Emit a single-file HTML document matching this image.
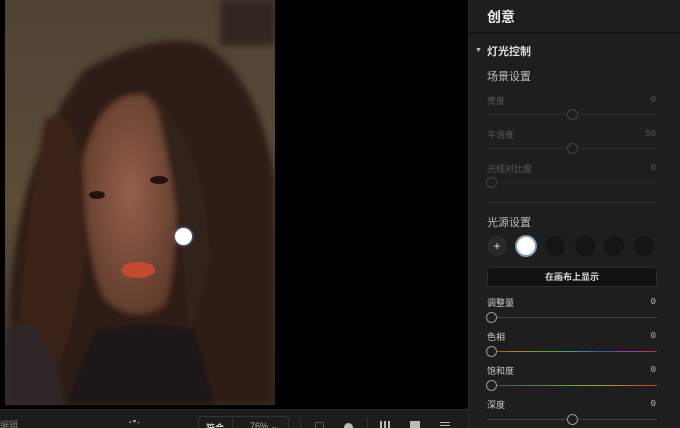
<!DOCTYPE html><html><head><meta charset="utf-8"><style>
*{margin:0;padding:0;box-sizing:border-box}
html,body{width:680px;height:428px;overflow:hidden}
body{background:#000;position:relative;font-family:"Liberation Sans","Noto Sans CJK SC",sans-serif}
.a{position:absolute}
.p{left:468px;top:0;width:212px;height:428px;background:#1e1e1e;border-left:1px solid #2a2a2a}
.t{font-size:10px;color:#d0d0d0;position:absolute}
.dim{color:#5a5a5a}
.v{position:absolute;right:24px;font-size:9px;font-family:"Liberation Mono",monospace}
.tr{position:absolute;left:487px;width:170px;height:1px;background:#3a3a3a}
.k{position:absolute;width:11px;height:11px;border-radius:50%;border:1.5px solid #9a9a9a;background:#1e1e1e}
.c{position:absolute;top:236px;width:20px;height:20px;border-radius:50%;background:#141414}
</style></head><body>
<svg class="a" style="left:5px;top:0" width="270" height="405" viewBox="0 0 270 405">
<defs><linearGradient id="bg" x1="0" y1="0" x2="0" y2="1"><stop offset="0" stop-color="#4e4232"/><stop offset=".5" stop-color="#5c4c38"/><stop offset="1" stop-color="#3a2e24"/></linearGradient>
<radialGradient id="f" cx=".5" cy=".45" r=".6"><stop offset="0" stop-color="#94604a"/><stop offset="1" stop-color="#5e3a2a"/></radialGradient>
<filter id="bl"><feGaussianBlur stdDeviation="3"/></filter></defs>
<rect width="270" height="405" fill="url(#bg)"/>
<rect x="215" y="0" width="55" height="45" fill="#302820" filter="url(#bl)"/>
<g filter="url(#bl)">
<path d="M5 405 L5 300 Q15 150 80 70 Q150 30 200 45 Q255 80 270 180 L270 405Z" fill="#2e1d17"/>
<path d="M78 160 Q95 90 140 95 Q170 120 172 200 Q170 280 160 305 Q130 325 100 300 Q80 260 78 160Z" fill="url(#f)"/>
<path d="M40 120 Q80 90 80 250 Q70 350 30 405 L10 405 Q15 250 40 120Z" fill="#3a2318"/>
<path d="M150 100 Q200 140 205 260 L185 340 Q175 200 150 100Z" fill="#33201a"/>
<path d="M90 330 Q150 320 190 330 L210 405 L60 405Z" fill="#1e1618"/>
<path d="M0 330 Q40 300 60 405 L0 405Z" fill="#2d2828"/>
</g>
<ellipse cx="133" cy="270" rx="17" ry="8" fill="#c24a30"/>
<ellipse cx="92" cy="195" rx="8" ry="4" fill="#24140e"/><ellipse cx="154" cy="180" rx="9" ry="4" fill="#24140e"/>
</svg>
<div class="a" style="left:175px;top:228px;width:17px;height:17px;border-radius:50%;background:#fff;box-shadow:0 0 3px #7ab8ff"></div>
<div class="a" style="left:0;top:409px;width:468px;height:19px;background:#1c1c1c;border-top:1px solid #2a2a2a"></div>
<div class="t" style="left:0;top:418px;color:#777;font-size:9px">编辑</div>
<div class="a" style="left:128px;top:420px;width:12px;height:10px;border-top:2px dotted #aaa;border-radius:50%"></div>
<div class="a" style="left:198px;top:416px;width:91px;height:20px;border:1px solid #333;border-radius:4px"></div>
<div class="t" style="left:206px;top:421px;font-size:9px;font-weight:bold;color:#ccc">符合</div>
<div class="a" style="left:232px;top:419px;width:1px;height:10px;background:#333"></div>
<div class="t" style="left:250px;top:421px;font-size:9px;color:#aaa">76% ⌄</div>
<div class="a" style="left:300px;top:418px;width:1px;height:10px;background:#333"></div>
<div class="a" style="left:315px;top:422px;width:9px;height:8px;border:1px solid #555"></div>
<div class="a" style="left:344px;top:423px;width:9px;height:9px;border-radius:50%;background:#bbb"></div>
<div class="a" style="left:367px;top:418px;width:1px;height:10px;background:#333"></div>
<div class="a" style="left:380px;top:421px;width:10px;height:8px;background:repeating-linear-gradient(90deg,#bbb 0 2px,transparent 2px 4px)"></div>
<div class="a" style="left:410px;top:421px;width:10px;height:8px;background:#bbb"></div>
<div class="a" style="left:440px;top:422px;width:10px;height:1px;background:#bbb;box-shadow:0 3px #bbb"></div>
<div class="a p"></div>
<div class="t" style="left:487px;top:7px;font-size:14px;font-weight:bold;color:#eee">创意</div>
<div class="a" style="left:468px;top:32px;width:212px;height:1px;background:#0e0e0e"></div>
<div class="t" style="left:475px;top:47px;font-size:7px;color:#bbb">▼</div>
<div class="t" style="left:487px;top:43px;font-size:11px;font-weight:bold;color:#ddd">灯光控制</div>
<div class="t" style="left:487px;top:68px;font-size:11px;color:#bbb">场景设置</div>
<div class="t dim" style="left:487px;top:94px;font-size:9px">亮度</div><div class="v dim" style="top:95px">0</div>
<div class="tr" style="top:114px;background:#2c2c2c"></div><div class="k" style="left:567px;top:109px;border-color:#444"></div>
<div class="t dim" style="left:487px;top:128px;font-size:9px">平滑度</div><div class="v dim" style="top:129px">50</div>
<div class="tr" style="top:148px;background:#2c2c2c"></div><div class="k" style="left:567px;top:143px;border-color:#444"></div>
<div class="t dim" style="left:487px;top:162px;font-size:9px">光线对比度</div><div class="v dim" style="top:163px">0</div>
<div class="tr" style="top:182px;background:#2c2c2c"></div><div class="k" style="left:486px;top:177px;border-color:#444"></div>
<div class="tr" style="top:202px;background:#2c2c2c"></div>
<div class="t" style="left:487px;top:214px;font-size:11px;color:#bbb">光源设置</div>
<div class="a" style="left:487px;top:236px;width:20px;height:20px;border-radius:50%;background:#2a2a2a;color:#ddd;font-size:12px;text-align:center;line-height:20px">+</div>
<div class="a" style="left:515px;top:235px;width:22px;height:22px;border-radius:50%;background:#fff;border:2px solid #7a9ab5"></div>
<div class="c" style="left:545px"></div><div class="c" style="left:575px"></div><div class="c" style="left:604px"></div><div class="c" style="left:634px"></div>
<div class="a" style="left:487px;top:267px;width:170px;height:20px;background:#111;border:1px solid #2c2c2c;border-radius:3px;color:#ddd;font-size:9px;font-weight:bold;text-align:center;line-height:18px">在画布上显示</div>
<div class="t" style="left:487px;top:296px;font-size:9px;color:#ccc">调整量</div><div class="v" style="top:297px;color:#bbb">0</div>
<div class="tr" style="top:317px;background:#444"></div><div class="k" style="left:486px;top:312px"></div>
<div class="t" style="left:487px;top:330px;font-size:9px;color:#ccc">色相</div><div class="v" style="top:331px;color:#bbb">0</div>
<div class="tr" style="top:351px;background:linear-gradient(90deg,#555,#a83,#5a3,#3a8,#35a,#a3a,#b33)"></div><div class="k" style="left:486px;top:346px"></div>
<div class="t" style="left:487px;top:364px;font-size:9px;color:#ccc">饱和度</div><div class="v" style="top:365px;color:#bbb">0</div>
<div class="tr" style="top:385px;background:linear-gradient(90deg,#446,#585,#9a3,#c33)"></div><div class="k" style="left:486px;top:380px"></div>
<div class="t" style="left:487px;top:398px;font-size:9px;color:#ccc">深度</div><div class="v" style="top:399px;color:#bbb">0</div>
<div class="tr" style="top:419px;background:#444"></div><div class="k" style="left:567px;top:414px"></div>
</body></html>
